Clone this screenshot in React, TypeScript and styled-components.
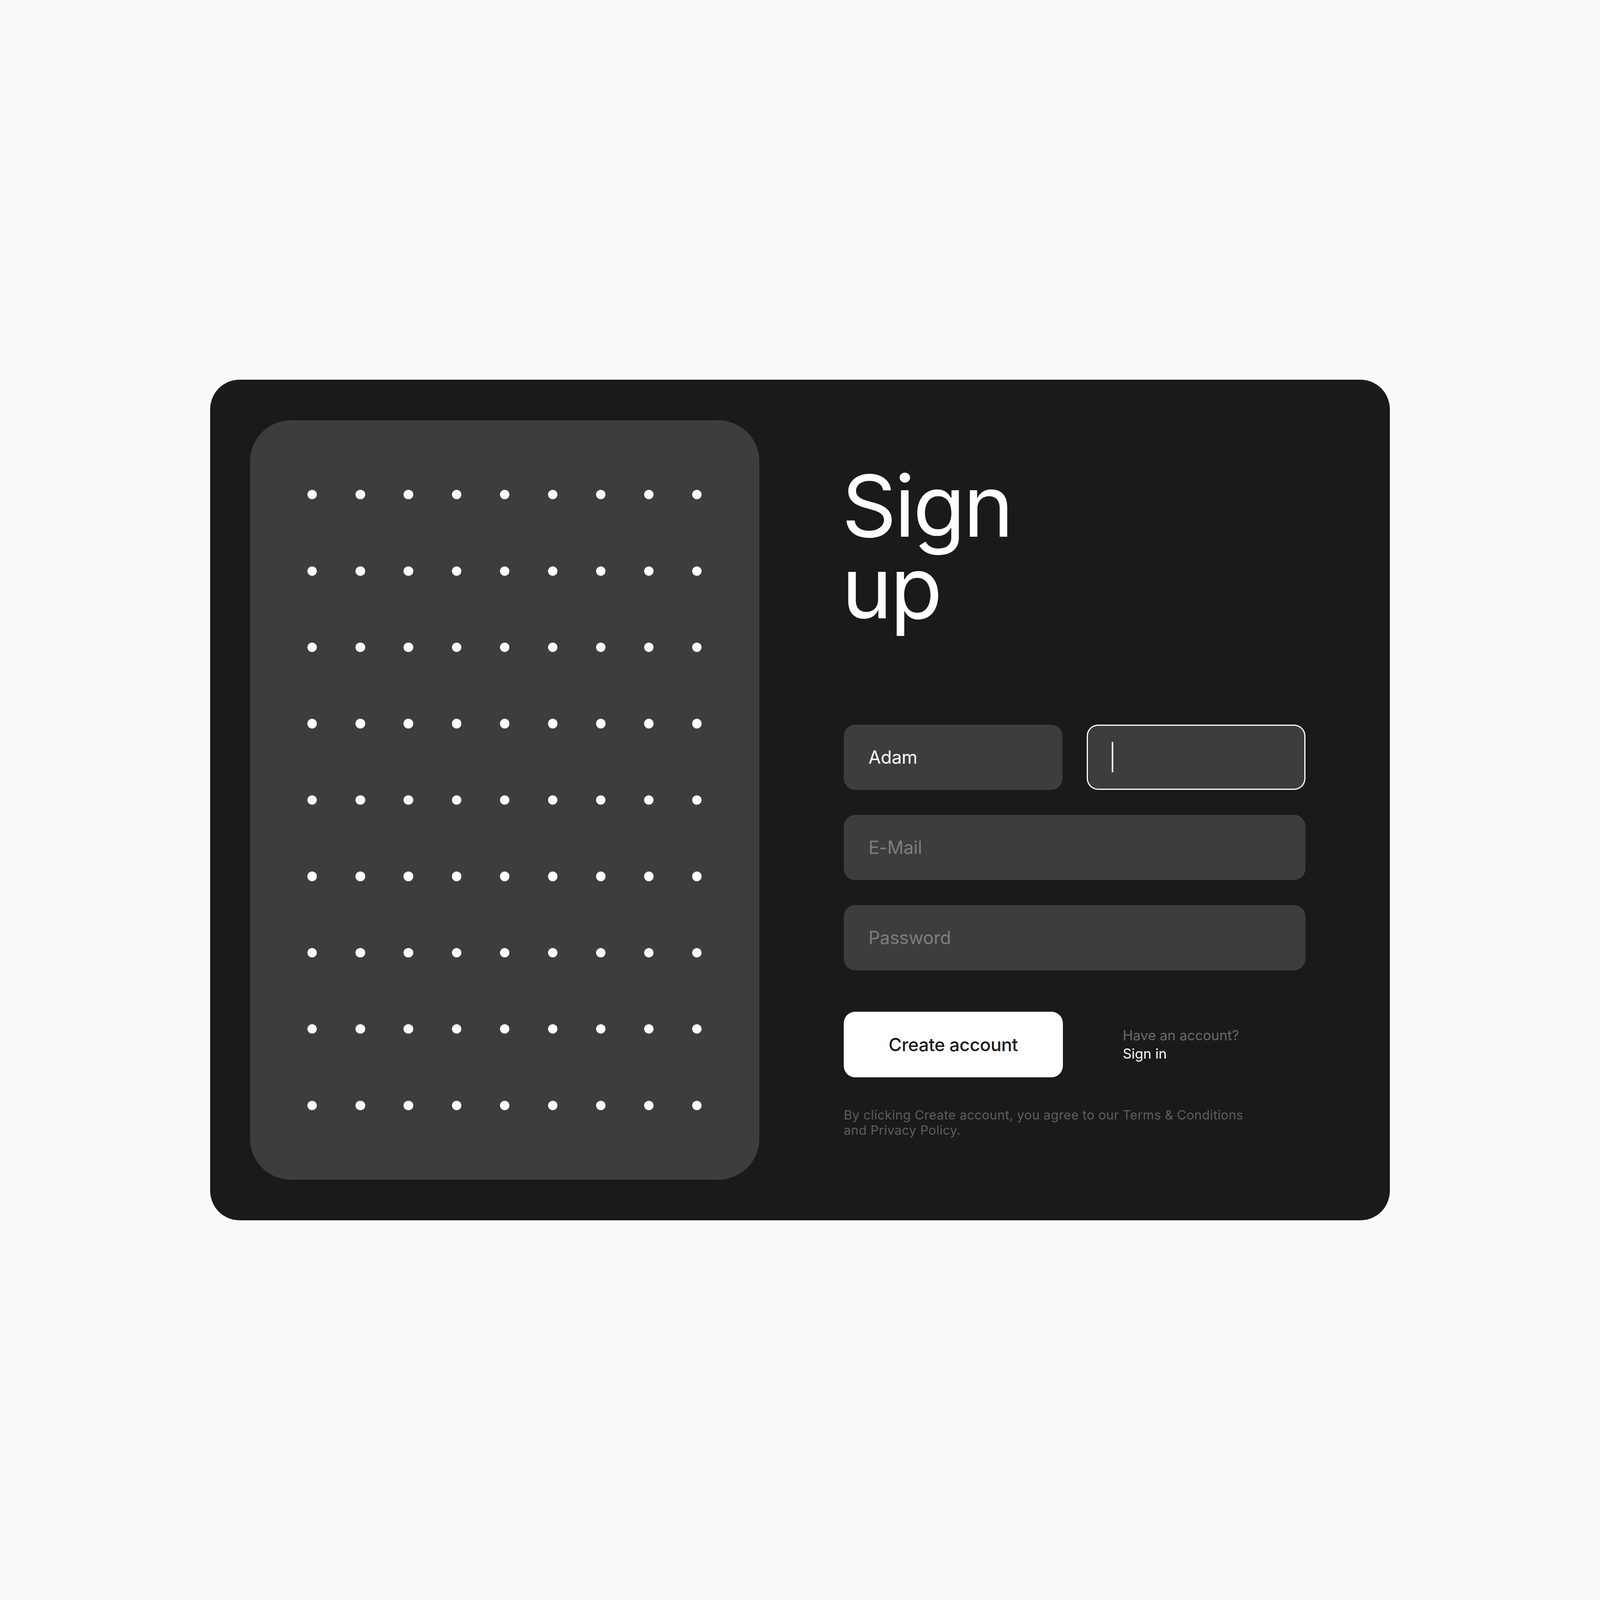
import React from "react";
import styled, { createGlobalStyle } from "styled-components";

// Measurements come from a 6400x4800 frame; --u scales them down when the window is smaller.
const u = (n: number) => `calc(${n} * var(--u))`;

const GlobalStyle = createGlobalStyle`
  :root {
    --u: min(calc(100vw / 6400), calc(100vh / 4800));
  }

  html, body {
    margin: 0;
    padding: 0;
    background: #fafafa;
  }

  body {
    font-family: Inter, "Liberation Sans", Arial, sans-serif;
    -webkit-font-smoothing: antialiased;
  }

  * {
    box-sizing: border-box;
  }
`;

const Page = styled.main`
  width: 100%;
  min-height: 100vh;
  display: flex;
  align-items: center;
  justify-content: center;
  background: #fafafa;
`;

const Card = styled.section`
  flex-shrink: 0;
  width: ${u(4720)};
  display: flex;
  gap: ${u(338)};
  padding: ${u(164)} ${u(338)} ${u(164)} ${u(160)};
  background: #1a1a1a;
  border-radius: ${u(118)};
`;

const DotPanel = styled.div`
  flex-shrink: 0;
  width: ${u(2037)};
  height: ${u(3036)};
  background: #3d3d3d;
  border-radius: ${u(164)};
  display: grid;
  grid-template-columns: repeat(9, ${u(38)});
  grid-auto-rows: ${u(38)};
  column-gap: ${u(154.4)};
  row-gap: ${u(267.4)};
  justify-content: center;
  align-content: center;
`;

const Dot = styled.span`
  width: ${u(38)};
  height: ${u(38)};
  border-radius: 50%;
  background: #ffffff;
`;

const FormColumn = styled.form`
  flex: 1;
  min-width: 0;
  display: flex;
  flex-direction: column;
`;

const Title = styled.h1`
  margin: ${u(179)} 0 0 ${u(-8)};
  font-size: ${u(342)};
  line-height: ${u(326)};
  font-weight: 400;
  letter-spacing: -0.025em;
  color: #ffffff;
`;

const Fields = styled.div`
  margin-top: ${u(385)};
  display: grid;
  grid-template-columns: repeat(2, minmax(0, 1fr));
  column-gap: ${u(98)};
  row-gap: ${u(100)};
`;

interface FieldBoxProps {
  $active?: boolean;
  $wide?: boolean;
}

const FieldBox = styled.label<FieldBoxProps>`
  grid-column: ${(props) => (props.$wide ? "1 / -1" : "auto")};
  min-width: 0;
  height: ${u(261)};
  display: flex;
  align-items: center;
  padding: 0 ${u(94)};
  background: #3d3d3d;
  border: ${u(6)} solid ${(props) => (props.$active ? "#ffffff" : "transparent")};
  border-radius: ${u(46)};
`;

const Caret = styled.span`
  flex-shrink: 0;
  width: ${u(7)};
  height: ${u(122)};
  background: #ffffff;
`;

const Input = styled.input`
  flex: 1;
  width: 100%;
  min-width: 0;
  padding: 0;
  border: none;
  outline: none;
  background: transparent;
  font-family: inherit;
  font-size: ${u(72)};
  font-weight: 400;
  letter-spacing: -0.005em;
  color: #ffffff;
  caret-color: transparent;

  &::placeholder {
    color: #7d7d7d;
  }
`;

const Actions = styled.div`
  margin-top: ${u(166)};
  display: flex;
  align-items: center;
  gap: ${u(240)};
`;

const PrimaryButton = styled.button`
  flex-shrink: 0;
  width: ${u(876)};
  height: ${u(263)};
  padding: 0;
  border: none;
  border-radius: ${u(46)};
  background: #ffffff;
  color: #1a1a1a;
  font-family: inherit;
  font-size: ${u(72)};
  font-weight: 500;
  letter-spacing: -0.01em;
  cursor: pointer;
`;

const SignInNote = styled.p`
  margin: 0;
  font-size: ${u(55)};
  line-height: ${u(74)};
  color: #6b6b6b;
  white-space: nowrap;
`;

const SignInLink = styled.a`
  display: block;
  color: #ffffff;
  text-decoration: none;
`;

const Legal = styled.p`
  margin: ${u(119)} 0 0;
  font-size: ${u(51)};
  line-height: ${u(62)};
  letter-spacing: 0.014em;
  color: #5e5e5e;
  white-space: nowrap;
`;

const dots = Array.from({ length: 81 }, (_, i) => i);

const App: React.FC = () => {
  return (
    <>
      <GlobalStyle />
      <Page>
        <Card>
          <DotPanel>
            {dots.map((i) => (
              <Dot key={i} />
            ))}
          </DotPanel>

          <FormColumn onSubmit={(e) => e.preventDefault()}>
            <Title>
              Sign
              <br />
              up
            </Title>

            <Fields>
              <FieldBox>
                <Input size={1} defaultValue="Adam" aria-label="First name" />
              </FieldBox>
              <FieldBox $active>
                <Caret />
                <Input size={1} aria-label="Last name" />
              </FieldBox>
              <FieldBox $wide>
                <Input size={1} type="email" placeholder="E-Mail" />
              </FieldBox>
              <FieldBox $wide>
                <Input size={1} type="password" placeholder="Password" />
              </FieldBox>
            </Fields>

            <Actions>
              <PrimaryButton type="submit">Create account</PrimaryButton>
              <SignInNote>
                Have an account?
                <SignInLink href="#">Sign in</SignInLink>
              </SignInNote>
            </Actions>

            <Legal>
              By clicking Create account, you agree to our Terms &amp; Conditions
              <br />
              and Privacy Policy.
            </Legal>
          </FormColumn>
        </Card>
      </Page>
    </>
  );
};

export default App;
